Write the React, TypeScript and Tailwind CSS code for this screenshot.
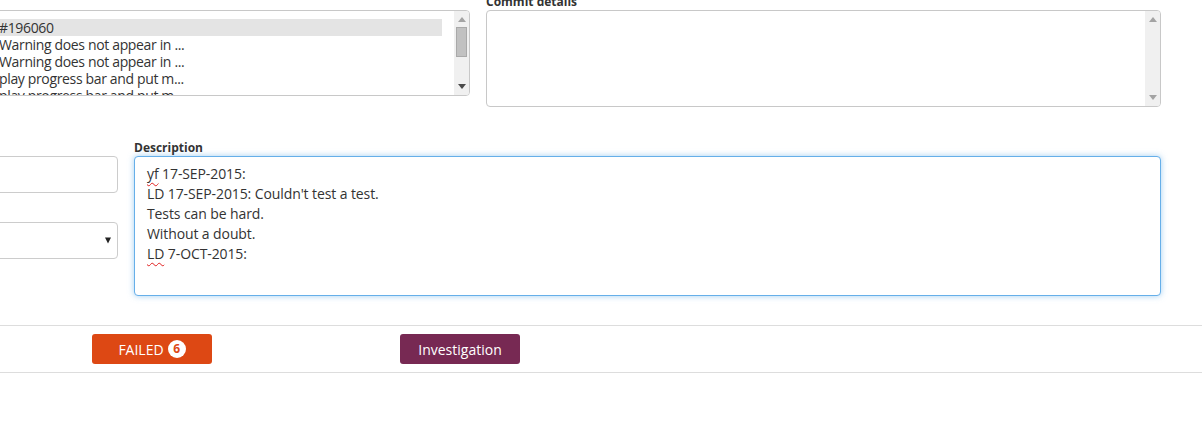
import React from "react";

const listRows = [
  "#196060",
  "Warning does not appear in ...",
  "Warning does not appear in ...",
  "play progress bar and put m...",
  "play progress bar and put m...",
];

function Arrow({ dir, color }: { dir: "up" | "down"; color: string }) {
  return (
    <svg width="8" height="5" viewBox="0 0 8 5" className="block">
      <path d={dir === "up" ? "M0 5 L4 0 L8 5 Z" : "M0 0 L4 5 L8 0 Z"} fill={color} />
    </svg>
  );
}

// fake native scrollbar, drawn as a column on the right of a box
function Scrollbar({ thumb, downColor }: { thumb: boolean; downColor: string }) {
  return (
    <div className="flex w-[15px] shrink-0 flex-col items-center justify-between bg-[#f0f0f0] py-[6px]">
      <div className="flex flex-col items-center">
        <Arrow dir="up" color="#a3a3a3" />
        {thumb && <div className="mt-[5px] h-[30px] w-[11px] border border-[#a9a9a9] bg-[#c1c1c1]" />}
      </div>
      <Arrow dir="down" color={downColor} />
    </div>
  );
}

export default function App() {
  return (
    <div className="h-[448px] w-[1202px] overflow-hidden bg-white font-['Open_Sans',sans-serif] text-[#333]">
      <div className="-ml-[10px] -mt-[7px] w-[1171px]">
        {/* top row: work item list + commit details */}
        <div className="flex items-start gap-[16px]">
          <div className="mt-[17px] flex h-[86px] w-[480px] overflow-hidden rounded-[4px] border border-[#c8c8c8] bg-white">
            <div className="flex-1 overflow-hidden pt-[8px] pr-[12px]">
              {listRows.map((row, i) => (
                <div
                  key={i}
                  className={`whitespace-nowrap pl-[8px] text-[14px] leading-[17px] tracking-[-0.35px] ${
                    i === 0 ? "bg-[#e4e4e4]" : ""
                  }`}
                >
                  {row}
                </div>
              ))}
            </div>
            <Scrollbar thumb downColor="#4a4a4a" />
          </div>

          <div className="flex-1">
            <label className="block text-[12px] font-bold leading-[17px]">Commit details</label>
            <div className="flex h-[97px] overflow-hidden rounded-[4px] border border-[#c8c8c8] bg-white">
              <div className="flex-1" />
              <Scrollbar thumb={false} downColor="#a3a3a3" />
            </div>
          </div>
        </div>

        {/* middle row: fields + description */}
        <div className="mt-[32px] flex items-start gap-[16px]">
          <div className="mt-[17px] w-[128px]">
            <div className="h-[37px] rounded-[4px] border border-[#cccccc] bg-white" />
            <div className="mt-[29px] flex h-[37px] items-center justify-end rounded-[4px] border border-[#cccccc] bg-white pr-[6px]">
              <svg width="6" height="7" viewBox="0 0 6 7">
                <path d="M0 0.5 L6 0.5 L3 6.5 Z" fill="#222" />
              </svg>
            </div>
          </div>

          <div className="flex-1">
            <label className="block text-[12px] font-bold leading-[17px]">Description</label>
            <div className="h-[140px] rounded-[4px] border border-[#66afe9] bg-white pl-[12px] pt-[7px] text-[14px] leading-[20px] tracking-[-0.1px] shadow-[0_0_6px_rgba(102,175,233,0.6)]">
              <div>
                <span className="underline decoration-[#e02020] decoration-wavy decoration-1 underline-offset-[3px]">yf</span> 17-SEP-2015:
              </div>
              <div>LD 17-SEP-2015: Couldn't test a test.</div>
              <div>Tests can be hard.</div>
              <div>Without a doubt.</div>
              <div>
                <span className="underline decoration-[#e02020] decoration-wavy decoration-1 underline-offset-[3px]">LD</span> 7-OCT-2015:
              </div>
            </div>
          </div>
        </div>
      </div>

      {/* status bar */}
      <div className="mt-[29px] border-y border-[#dddddd] py-[8px]">
        <div className="flex gap-[188px] pl-[92px]">
          <button className="flex h-[30px] w-[120px] items-center justify-center gap-[4px] rounded-[3px] bg-[#dd4814] text-[14px] text-white">
            FAILED
            <span className="flex h-[18px] w-[18px] items-center justify-center rounded-full bg-white text-[12px] font-bold text-[#dd4814]">
              6
            </span>
          </button>
          <button className="flex h-[30px] w-[120px] items-center justify-center rounded-[3px] bg-[#772953] text-[14px] text-white">
            Investigation
          </button>
        </div>
      </div>
    </div>
  );
}
